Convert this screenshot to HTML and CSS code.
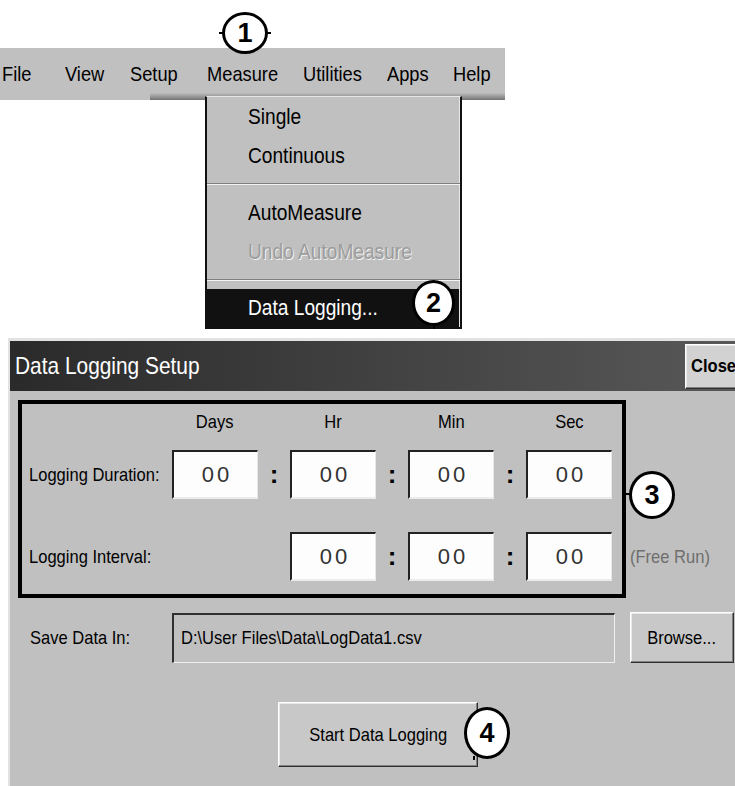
FILE: index.html
```html
<!DOCTYPE html>
<html lang="en">

<head>
  <meta charset="UTF-8">
  <title>Data Logging Setup</title>
  <link rel="stylesheet" href="styles.css">
</head>

<body>
  <div class="screen">
    <div class="menubar">
      <span class="cond">File</span>
      <span class="cond">View</span>
      <span class="cond">Setup</span>
      <span class="cond">Measure</span>
      <span class="cond">Utilities</span>
      <span class="cond">Apps</span>
      <span class="cond">Help</span>
    </div>

    <div class="dropdown">
      <div class="dd-item"><span class="cond">Single</span></div>
      <div class="dd-item"><span class="cond">Continuous</span></div>
      <div class="dd-sep"></div>
      <div class="dd-item"><span class="cond">AutoMeasure</span></div>
      <div class="dd-item off"><span class="cond">Undo AutoMeasure</span></div>
      <div class="dd-sep"></div>
      <div class="dd-item on"><span class="cond">Data Logging...</span></div>
    </div>

    <div class="dialog">
      <div class="titlebar">
        <span class="title cond">Data Logging Setup</span>
        <button type="button" class="btn close"><span class="cond">Close</span></button>
      </div>

      <div class="dialog-body">
        <div class="time-wrap">
          <div class="timebox">
            <div class="trow head">
              <span class="lbl"></span>
              <span class="unit"><span class="cond mid">Days</span></span>
              <span class="colon"></span>
              <span class="unit"><span class="cond mid">Hr</span></span>
              <span class="colon"></span>
              <span class="unit"><span class="cond mid">Min</span></span>
              <span class="colon"></span>
              <span class="unit"><span class="cond mid">Sec</span></span>
            </div>
            <div class="trow data">
              <span class="lbl"><span class="cond">Logging Duration:</span></span>
              <span class="field">00</span>
              <span class="colon">:</span>
              <span class="field">00</span>
              <span class="colon">:</span>
              <span class="field">00</span>
              <span class="colon">:</span>
              <span class="field">00</span>
            </div>
            <div class="trow data">
              <span class="lbl"><span class="cond">Logging Interval:</span></span>
              <span class="skip"></span>
              <span class="field">00</span>
              <span class="colon">:</span>
              <span class="field">00</span>
              <span class="colon">:</span>
              <span class="field">00</span>
            </div>
          </div>
          <div class="side">
            <span class="hint cond">(Free Run)</span>
          </div>
        </div>

        <div class="save-row">
          <span class="save-lbl"><span class="cond">Save Data In:</span></span>
          <span class="path"><span class="cond">D:\User Files\Data\LogData1.csv</span></span>
          <button type="button" class="btn browse"><span class="cond mid">Browse...</span></button>
        </div>

        <div class="start-row">
          <button type="button" class="btn start"><span class="cond mid">Start Data Logging</span></button>
        </div>
      </div>
    </div>

    <!-- numbered callouts -->
    <span class="callout c1">1</span>
    <span class="callout c2">2</span>
    <span class="callout c3">3</span>
    <span class="callout c4">4</span>
  </div>
</body>

</html>
```

FILE: styles.css
```css
* {
  box-sizing: border-box;
}

body {
  margin: 0;
  background: #fff;
  color: #000;
  font-family: "Liberation Sans", Arial, sans-serif;
}

.screen {
  position: relative;
  width: 735px;
  height: 786px;
  overflow: hidden;
}

/* the screen font is a narrow sans, squeeze Arial widths */
.cond {
  display: inline-block;
  white-space: nowrap;
  transform: scaleX(0.87);
  transform-origin: left center;
}

.cond.mid {
  transform-origin: center;
}

/* menu bar */
.menubar {
  margin-top: 48px;
  width: 505px;
  height: 52px;
  padding-left: 2px;
  display: grid;
  grid-template-columns: 63px 65px 77px 96px 84px 66px auto;
  align-items: center;
  font-size: 21px;
  background:
    linear-gradient(to bottom, rgba(0, 0, 0, 0) 86%, rgba(0, 0, 0, 0.4)) no-repeat 150px 0 / 355px 52px,
    #c0c0c0;
}

.dropdown {
  position: relative;
  margin: -4px 0 0 205px;
  width: 257px;
  background: #c0c0c0;
  border: 2px solid #111;
  border-top: 1px solid #e6e6e6;
  box-shadow: inset -1px -1px 0 #e6e6e6;
  font-size: 22px;
}

.dd-item {
  height: 39px;
  line-height: 39px;
  padding-left: 41px;
}

.dd-item.off {
  color: #9c9c9c;
  text-shadow: 1px 1px 0 #f2f2f2;
}

.dd-item.on {
  height: 38px;
  line-height: 38px;
  margin-right: 1px;
  background: #111;
  color: #fff;
}

.dd-sep {
  height: 18px;
  display: flex;
  align-items: center;
}

.dd-sep::before {
  content: "";
  width: 100%;
  border-top: 1px solid #808080;
  border-bottom: 1px solid #f4f4f4;
}

/* dialog */
.dialog {
  margin: 9px 0 0 8px;
  height: 460px;
  background: #c0c0c0;
  border-left: 2px solid #e2e2e2;
  border-top: 3px solid #e2e2e2;
}

.titlebar {
  height: 50px;
  padding-left: 5px;
  display: flex;
  align-items: center;
  justify-content: space-between;
  background: linear-gradient(to right, #2a2a2a, #585858);
}

.title {
  color: #fff;
  font-size: 24px;
}

.btn {
  background: #c8c8c8;
  border: 1px solid;
  border-color: #fff #303030 #303030 #fff;
  box-shadow: inset -1px -1px 0 #808080, inset 1px 1px 0 #e8e8e8;
  color: #000;
  font-family: inherit;
  font-size: 19px;
  padding: 0;
}

.close {
  width: 62px;
  height: 45px;
  margin-right: -12px;
  padding-left: 5px;
  text-align: left;
  background: #d2d2d2;
  font-weight: bold;
}

.dialog-body {
  padding: 9px 0 0 8px;
  font-size: 19px;
}

.time-wrap {
  display: flex;
}

.timebox {
  width: 608px;
  height: 198px;
  border: 4px solid #000;
}

.trow {
  display: flex;
  align-items: center;
}

.trow.head {
  height: 46px;
  align-items: flex-start;
  padding-top: 7px;
  line-height: 22px;
}

.trow.data {
  height: 49px;
}

.trow.data + .trow.data {
  margin-top: 33px;
}

.lbl {
  width: 150px;
  padding-left: 7px;
}

.unit {
  width: 86px;
  text-align: center;
}

.skip {
  width: 118px;
}

.colon {
  width: 32px;
  text-align: center;
  font-size: 26px;
  font-weight: bold;
}

.field {
  width: 86px;
  height: 49px;
  padding-left: 3px;
  display: flex;
  align-items: center;
  justify-content: center;
  background: #fdfdfd;
  border-style: solid;
  border-width: 2px 1px 2px 2px;
  border-color: #222 #e8e8e8 #ececec #222;
  color: #333;
  font-size: 22px;
  letter-spacing: 3px;
}

.side {
  display: flex;
  flex-direction: column;
  justify-content: flex-end;
  padding: 0 0 30px 4px;
}

.hint {
  color: #6e6e6e;
  line-height: 22px;
}

.save-row {
  display: flex;
  align-items: center;
  margin-top: 14px;
  height: 51px;
}

.save-lbl {
  width: 154px;
  padding-left: 12px;
}

.path {
  width: 443px;
  height: 50px;
  padding-left: 7px;
  display: flex;
  align-items: center;
  border-style: solid;
  border-width: 2px 1px 1px 2px;
  border-color: #303030 #f0f0f0 #f0f0f0 #303030;
}

.browse {
  width: 104px;
  height: 51px;
  margin-left: 15px;
}

.start-row {
  margin-top: 39px;
  padding-left: 260px;
}

.start {
  width: 200px;
  height: 65px;
}

/* callouts drawn over the screenshot */
.callout {
  position: absolute;
  display: flex;
  align-items: center;
  justify-content: center;
  background: #fff;
  border: 3px solid #000;
  border-radius: 50%;
  font-size: 27px;
  font-weight: bold;
}

/* little leader stubs */
.callout::after {
  content: "";
  position: absolute;
  background: #000;
}

.c1 {
  left: 222px;
  top: 12px;
  width: 46px;
  height: 42px;
}

.c1::after {
  left: -6px;
  right: -6px;
  top: 17px;
  height: 2px;
  background: linear-gradient(to right, #000 4px, transparent 4px, transparent calc(100% - 4px), #000 0);
}

.c2 {
  left: 412px;
  top: 280px;
  width: 43px;
  height: 46px;
}

.c2::after {
  left: 18px;
  bottom: -6px;
  width: 2px;
  height: 4px;
}

.c3 {
  left: 629px;
  top: 471px;
  width: 46px;
  height: 48px;
}

.c3::after {
  left: -6px;
  top: 19px;
  width: 4px;
  height: 2px;
}

.c4 {
  left: 464px;
  top: 707px;
  width: 46px;
  height: 52px;
}

.c4::after {
  left: 6px;
  bottom: -4px;
  width: 2px;
  height: 4px;
}
```
